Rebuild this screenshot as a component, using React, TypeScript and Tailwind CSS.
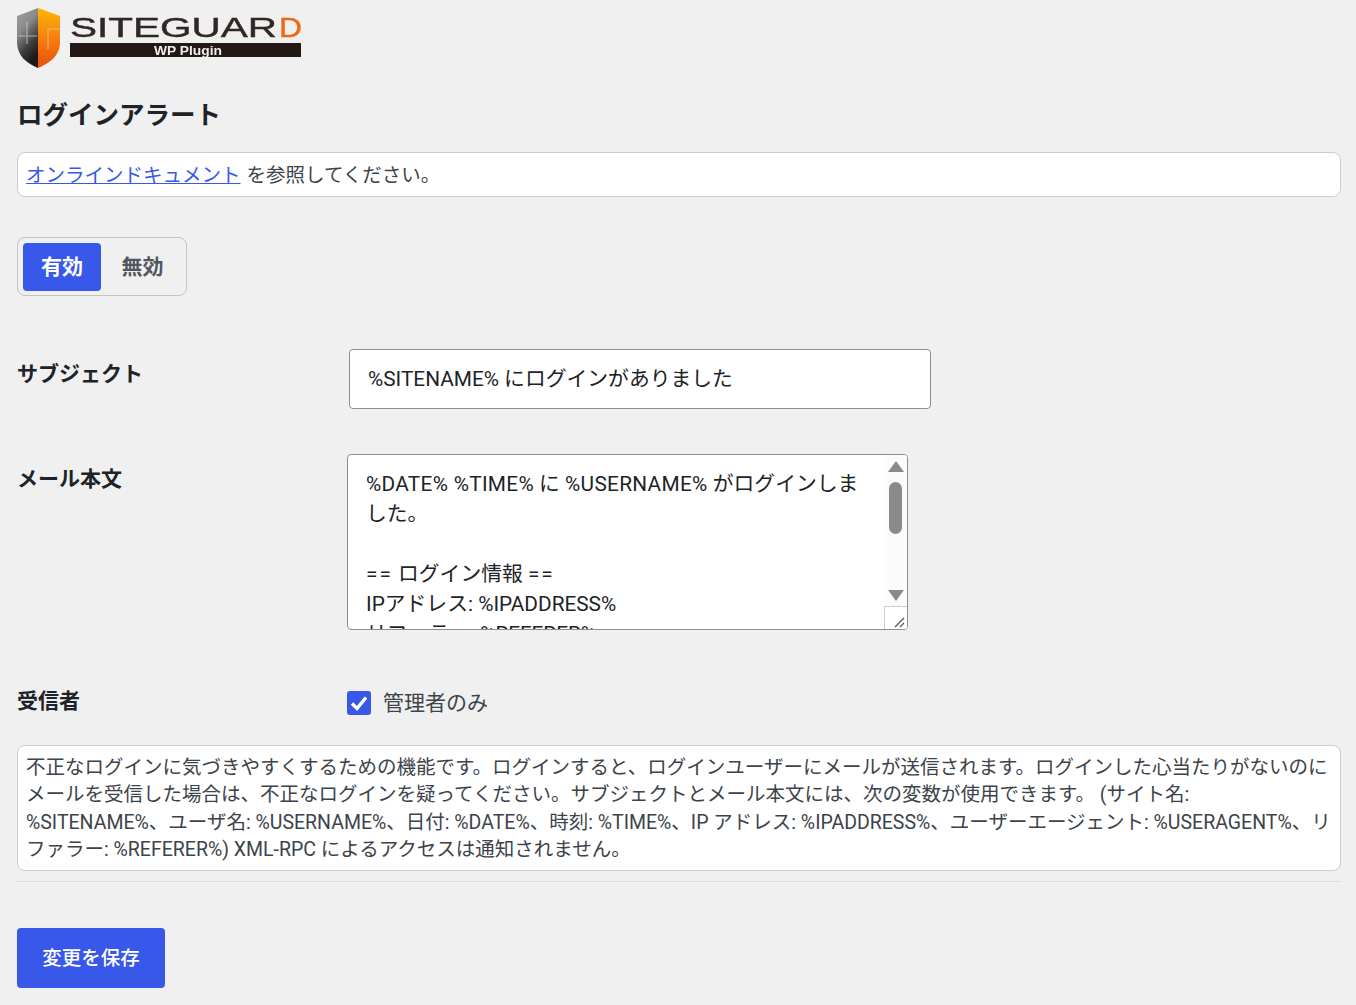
const font = { fontFamily: 'Roboto, "Noto Sans CJK JP", sans-serif' };

function Logo() {
  return (
    <svg width="290" height="62" viewBox="0 0 290 62" className="block blur-[0.4px]">
      <defs>
        <linearGradient id="lg" x1="0" y1="0" x2="0.4" y2="1">
          <stop offset="0" stopColor="#a0a0a0" />
          <stop offset="0.4" stopColor="#8a8a8a" />
          <stop offset="0.75" stopColor="#3c3a38" />
          <stop offset="1" stopColor="#1d1a18" />
        </linearGradient>
        <linearGradient id="rg" x1="0" y1="0" x2="0" y2="1">
          <stop offset="0" stopColor="#fbb900" />
          <stop offset="0.5" stopColor="#f67f10" />
          <stop offset="1" stopColor="#e84e0a" />
        </linearGradient>
      </defs>
      <path d="M21 0 L0 8 V36 C1 48 9 55 21 60 Z" fill="url(#lg)" />
      <path d="M21 0 L43 8 V36 C42 48 33 55 21 60 Z" fill="url(#rg)" />
      <path d="M1 28 H20 M10 14 V36" fill="none" stroke="#d0d0d0" strokeOpacity="0.5" strokeWidth="1.6" />
      <path d="M31 41 V21 H43" fill="none" stroke="#fbb060" strokeOpacity="0.8" strokeWidth="1.6" />
      <text x="53" y="29" fontFamily="Liberation Sans, sans-serif" fontSize="28" fill="#2f2725" stroke="#2f2725" strokeWidth="0.4" textLength="207" lengthAdjust="spacingAndGlyphs">SITEGUAR</text>
      <text x="262" y="29" fontFamily="Liberation Sans, sans-serif" fontSize="28" fill="#ee6a12" stroke="#ee6a12" strokeWidth="0.4" textLength="23" lengthAdjust="spacingAndGlyphs">D</text>
      <rect x="53" y="35" width="231" height="14" fill="#231815" />
      <text x="137" y="47" fontFamily="Liberation Sans, sans-serif" fontSize="13" fontWeight="700" fill="#eeeeee" textLength="68" lengthAdjust="spacingAndGlyphs">WP Plugin</text>
    </svg>
  );
}

export default function App() {
  return (
    <div className="min-h-[1005px] bg-[#f0f0f0] pl-[17px] pr-[15px] pt-[8px] text-[#3c434a]" style={font}>
      <Logo />

      <h1 className="mt-[25px] text-[25.5px] leading-[40px] font-bold text-[#1d2327]">ログインアラート</h1>

      <div className="mt-[17px] flex h-[45px] items-center rounded-lg border border-[#ccc] bg-white px-[8px] pt-[2px] text-[19.5px]">
        <a href="#" className="text-[#3858e9] underline">オンラインドキュメント</a>
        <span className="ml-[6px]">を参照してください。</span>
      </div>

      <div className="mt-[40px] flex h-[59px] w-[170px] items-center rounded-lg border border-[#c3c4c7] pl-[5px] text-[21px] font-bold">
        <span className="flex h-[48px] w-[78px] items-center justify-center rounded bg-[#3858e9] pt-[2px] text-white">有効</span>
        <span className="flex h-[48px] w-[83px] items-center justify-center pt-[2px] text-[#50575e]">無効</span>
      </div>

      <div className="mt-[53px] flex items-start">
        <div className="mt-[9px] w-[332px] text-[21px] leading-[32px] font-bold text-[#1d2327]">サブジェクト</div>
        <div className="flex h-[60px] w-[582px] items-center rounded-sm border border-[#8c8f94] bg-white px-[18px] pt-[2px] text-[20.8px] text-[#1d2327]">
          %SITENAME% にログインがありました
        </div>
      </div>

      <div className="mt-[45px] flex items-start">
        <div className="mt-[9px] w-[330px] text-[21px] leading-[32px] font-bold text-[#1d2327]">メール本文</div>
        <div className="relative h-[176px] w-[561px] overflow-hidden rounded-sm border border-[#8c8f94] bg-white pl-[18px] pr-[46px] pt-[14px] text-[20.8px] leading-[30px] text-[#1d2327]">
          <p>
            <span className="tracking-[0.3px]">%DATE% %TIME%</span> に <span className="tracking-[0.3px]">%USERNAME%</span> がログインしました。
          </p>
          <p className="mt-[30px]">
            <span className="tracking-[2px]">==</span> ログイン情報 <span className="tracking-[2px]">==</span>
          </p>
          <p>IPアドレス: %IPADDRESS%</p>
          <p>リファラー: %REFERER%</p>
          <div className="absolute right-0 top-0 h-full w-[23px] bg-[#fbfbfb]">
            <svg width="16" height="12" viewBox="0 0 16 12" className="absolute left-[4px] top-[6px]">
              <path d="M8 0 L16 11 H0 Z" fill="#8a8a8a" />
            </svg>
            <div className="absolute left-[5px] top-[27px] h-[52px] w-[13px] rounded-full bg-[#8a8a8a]" />
            <svg width="16" height="12" viewBox="0 0 16 12" className="absolute left-[4px] top-[134px]">
              <path d="M0 1 H16 L8 12 Z" fill="#8a8a8a" />
            </svg>
            <div className="absolute bottom-0 right-0 h-[23px] w-[23px] border-l border-t border-[#ccc] bg-white">
              <svg width="22" height="22" viewBox="0 0 22 22" className="block">
                <path d="M10 20 L19 11 M15 20 L19 16" stroke="#555" strokeWidth="1.2" />
              </svg>
            </div>
          </div>
        </div>
      </div>

      <div className="mt-[54px] flex items-start">
        <div className="mt-[1px] w-[330px] text-[21px] leading-[32px] font-bold text-[#1d2327]">受信者</div>
        <label className="mt-[4px] flex items-center text-[21px] leading-[30px]">
          <span className="flex h-[24px] w-[24px] items-center justify-center rounded-[3px] bg-[#3858e9]">
            <svg width="20" height="20" viewBox="0 0 20 20">
              <path d="M3 10.5 L8 15.5 L17 4.5" fill="none" stroke="#fff" strokeWidth="3.4" />
            </svg>
          </span>
          <span className="ml-[12px]">管理者のみ</span>
        </label>
      </div>

      <div className="mt-[27px] rounded-lg border border-[#ccc] bg-white px-[8px] pb-[6.5px] pt-[7.5px] text-[19.5px] leading-[27.5px]">
        不正なログインに気づきやすくするための機能です。ログインすると、ログインユーザーにメールが送信されます。ログインした心当たりがないのにメールを受信した場合は、不正なログインを疑ってください。サブジェクトとメール本文には、次の変数が使用できます。 (サイト名: %SITENAME%、ユーザ名: %USERNAME%、日付: %DATE%、時刻: %TIME%、IP アドレス: %IPADDRESS%、ユーザーエージェント: %USERAGENT%、リファラー: %REFERER%) XML-RPC によるアクセスは通知されません。
      </div>

      <hr className="mt-[10px] border-0 border-t border-[#dcdcde]" />

      <button className="mt-[46px] h-[60px] w-[148px] rounded-sm bg-[#3858e9] pt-[2px] text-[19.5px] font-medium text-white">変更を保存</button>
    </div>
  );
}
